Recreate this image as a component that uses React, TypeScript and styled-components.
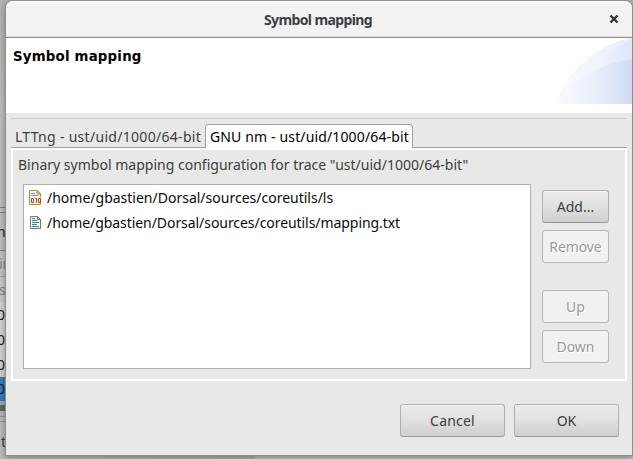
import React from 'react';
import styled, { createGlobalStyle, css } from 'styled-components';

const GlobalStyle = createGlobalStyle`
  * { box-sizing: border-box; }
  body {
    margin: 0;
    overflow: hidden;
    font-family: "Noto Sans", "Open Sans", sans-serif;
    font-size: 14px;
    color: #3a4042;
  }
`;

const Desktop = styled.div`
  position: relative;
  width: 633px;
  height: 459px;
  overflow: hidden;
  background: linear-gradient(#b2b2b1, #c0c0bf 120px, #bdbdbc);
`;

const Behind = styled.div`
  display: flex;
  flex-direction: column;
  height: 459px;
`;

const Strip = styled.div<{ $h: number; $bg?: string; $line?: string; $ink?: string }>`
  display: flex;
  align-items: center;
  flex: none;
  height: ${(p) => p.$h}px;
  line-height: 18px;
  white-space: pre;
  background: ${(p) => p.$bg ?? 'transparent'};
  border-bottom: ${(p) => (p.$line ? `1px solid ${p.$line}` : 'none')};
  color: ${(p) => p.$ink ?? '#1d1d1d'};
`;

const Clipped = styled.span<{ $shift: number }>`
  margin-left: ${(p) => p.$shift}px;
`;

const BottomStrip = styled.div`
  display: flex;
  flex: 1;
  align-items: flex-start;
  padding-top: 11px;
  border-right: 378px solid #c6c6c5;
  background: linear-gradient(90deg, #bdbdbc, #b3b3b2);
  line-height: 18px;
`;

const Dialog = styled.section`
  position: absolute;
  left: 5px;
  top: 0;
  width: 628px;
  height: 456px;
  display: flex;
  flex-direction: column;
  border: 1px solid #8e8e8d;
  border-radius: 8px 8px 0 0;
  background: #e8e8e6;
  box-shadow: 0 2px 7px rgba(0, 0, 0, 0.35);
`;

const TitleBar = styled.header`
  display: grid;
  grid-template-columns: 36px 1fr 36px;
  align-items: center;
  flex: none;
  height: 37px;
  border-top: 1px solid #fff;
  border-bottom: 1px solid #8e8e8e;
  border-radius: 7px 7px 0 0;
  background: linear-gradient(#f3f3f3 33px, #dedede);
`;

const WindowTitle = styled.h1`
  grid-column: 2;
  margin: 1px 0 0 -2px;
  font-size: 14px;
  font-weight: 700;
  line-height: 20px;
  letter-spacing: -0.6px;
  text-align: center;
`;

const CloseButton = styled.button`
  display: grid;
  place-items: center;
  padding: 0 0 1px;
  border: 0;
  background: none;
`;

const Banner = styled.div`
  display: flex;
  justify-content: space-between;
  flex: none;
  height: 75px;
  background: #fff;
`;

const BannerTitle = styled.h2`
  margin: 10px 0 0 7px;
  color: #000;
  font: bold 13.35px/18px "DejaVu Sans", sans-serif;
  letter-spacing: 0.2px;
`;

const Divider = styled.div`
  flex: none;
  height: 1px;
  margin: 5px 5px 0;
  background: #d0d0ce;
`;

const TabBar = styled.div`
  display: flex;
  flex: none;
  height: 24px;
  margin: 5px 5px 0;
`;

const Tab = styled.div<{ $active?: boolean }>`
  flex: none;
  line-height: 18px;
  font-size: 14px;
  white-space: nowrap;
  ${(p) =>
    p.$active
      ? css`
          width: 208px;
          padding: 3px 0 0 4px;
          border: 1px solid #a1a1a0;
          border-bottom: 0;
          border-radius: 4px 4px 0 0;
          background: #fff;
          color: #000;
          letter-spacing: 0.14px;
        `
      : css`
          width: 194px;
          padding: 4px 0 0 4px;
          border-bottom: 1px solid #a1a1a0;
          letter-spacing: 0.3px;
        `}
`;

const TabFill = styled.div`
  flex: 1;
  border-bottom: 1px solid #a1a1a0;
`;

const Panel = styled.div`
  display: flex;
  flex-direction: column;
  flex: none;
  height: 233px;
  margin: 0 5px;
  padding: 5px 16px 10px 10px;
  border: 2px solid #fff;
`;

const PanelLabel = styled.div`
  height: 29px;
  margin-left: -5px;
  line-height: 20px;
  white-space: nowrap;
  letter-spacing: 0.01px;
`;

const PanelBody = styled.div`
  display: flex;
  gap: 11px;
`;

const FileList = styled.ul`
  flex: none;
  width: 508px;
  height: 185px;
  margin: 0;
  padding: 0 0 0 3px;
  border: 1px solid #b1b1ae;
  background: #fff;
  list-style: none;
`;

const FileRow = styled.li<{ $track: number }>`
  display: flex;
  align-items: center;
  gap: 4px;
  height: 25px;
  color: #0a0a0a;
  white-space: nowrap;
  letter-spacing: ${(p) => p.$track}px;
  & > svg {
    margin-bottom: 1px;
  }
`;

const Actions = styled.div`
  display: flex;
  flex-direction: column;
  gap: 7px;
  padding-top: 6px;
`;

const ActionGroup = styled.div`
  display: flex;
  flex-direction: column;
  gap: 7px;
  margin-bottom: 20px;
`;

const Button = styled.button<{ $w: number; $track?: number }>`
  width: ${(p) => p.$w}px;
  height: 33px;
  padding: 0;
  border: 1px solid #b0b0ae;
  border-bottom-color: #949492;
  border-radius: 3px;
  background: linear-gradient(#ebebea, #e2e2e1 45%, #cfcfce);
  box-shadow: inset 0 1px #f8f8f7;
  color: #3a4042;
  font: 14px/20px "Noto Sans", sans-serif;
  letter-spacing: ${(p) => p.$track ?? 0}px;
  &:disabled {
    border-color: #b7b7b5;
    background: #f1f1f1;
    box-shadow: none;
    color: #999c9d;
    text-shadow: 1px 1px #fff;
  }
`;

const Footer = styled.footer`
  display: flex;
  justify-content: flex-end;
  gap: 9px;
  padding: 23px 13px 0 0;
`;

const CloseIcon = () => (
  <svg width="10" height="10" viewBox="0 0 10 10">
    <path d="M1.5 1.5 8.5 8.5M8.5 1.5 1.5 8.5" stroke="#2e3436" strokeWidth="2.4" />
  </svg>
);

const BannerArt = () => (
  <svg width="75" height="75" viewBox="0 0 75 75">
    <defs>
      <linearGradient id="outer" x1="0" x2="1">
        <stop offset="0" stopColor="#f8faff" />
        <stop offset=".6" stopColor="#eff3fc" />
        <stop offset="1" stopColor="#e6edfa" />
      </linearGradient>
      <linearGradient id="edge" x1="0" x2="1">
        <stop offset="0" stopColor="#eff3fc" />
        <stop offset="1" stopColor="#dde6f8" />
      </linearGradient>
      <linearGradient id="inner" x1="0" x2="1">
        <stop offset="0" stopColor="#fafbff" />
        <stop offset=".6" stopColor="#e6ecfa" />
        <stop offset="1" stopColor="#cfdbf4" />
      </linearGradient>
    </defs>
    <path d="M0 66C1 43 40 4 75 0V66Z" fill="url(#outer)" />
    <path d="M43 32C48 19 59 6 75 1V34Z" fill="url(#edge)" />
    <path d="M0 66C10 48 39 26 75 21V66Z" fill="url(#inner)" />
  </svg>
);

const BinaryIcon = () => (
  <svg width="16" height="16" viewBox="0 0 16 16">
    <path d="M2.5 1.5H10L13.5 5V15.5H2.5Z" fill="#fbf8ee" stroke="#b88a30" />
    <path d="M10 1.5V5H13.5Z" fill="#e8c77a" stroke="#b88a30" />
    <path d="M4 4.5H8M4 6.5H11" stroke="#7a93c4" />
    <path d="M12 8H15V14H12Z" fill="#fbf3ea" />
    <path d="M4.5 9.5H6.5V13.5H4.5ZM8 9.5H9.5V14M11.5 9.5H13.5V13.5H11.5Z" fill="none" stroke="#b8401a" />
  </svg>
);

const TextIcon = () => (
  <svg width="16" height="16" viewBox="0 0 16 16">
    <path d="M3.5 2.5H10.5L13.5 5.5V14.5H3.5Z" fill="#f5faf8" stroke="#77776a" />
    <path d="M10.5 2.5V5.5H13.5Z" fill="#c9c9ae" stroke="#77776a" />
    <path d="M5 4.5H8M5 6.5H10M5 8.5H12M5 10.5H10M5 12.5H12" stroke="#278e94" />
  </svg>
);

export default function App() {
  return (
    <Desktop>
      <GlobalStyle />
      <Behind>
        <Strip $h={208} $line="#858584" />
        <Strip $h={5} $line="#858584" />
        <Strip $h={38} $line="#858584"><Clipped $shift={-3}>n</Clipped></Strip>
        <Strip $h={26} $bg="#c4c4c3" $line="#a1a1a0" $ink="#858585"><Clipped $shift={-1}>in</Clipped></Strip>
        <Strip $h={25} $bg="#c9c9c9" $ink="#858585"><Clipped $shift={-1}>s</Clipped></Strip>
        <Strip $h={25} $bg="#d2d2d2"><Clipped $shift={-3}>0</Clipped></Strip>
        <Strip $h={25} $bg="#d2d2d2"><Clipped $shift={-3}>0</Clipped></Strip>
        <Strip $h={25} $bg="#d2d2d2"><Clipped $shift={-3}>0</Clipped></Strip>
        <Strip $h={24} $bg="#3b7abb"><Clipped $shift={-3}>0</Clipped></Strip>
        <Strip $h={4} $bg="#a5a5a4" />
        <Strip $h={6} $bg="#646766" />
        <Strip $h={6} $bg="#b6b6b5" $line="#929291" />
        <Strip $h={5} $line="#929291" />
        <BottomStrip><Clipped $shift={1}>t</Clipped></BottomStrip>
      </Behind>
      <Dialog>
        <TitleBar>
          <WindowTitle>Symbol mapping</WindowTitle>
          <CloseButton aria-label="Close"><CloseIcon /></CloseButton>
        </TitleBar>
        <Banner>
          <BannerTitle>Symbol mapping</BannerTitle>
          <BannerArt />
        </Banner>
        <Divider />
        <TabBar>
          <Tab>LTTng - ust/uid/1000/64-bit</Tab>
          <Tab $active>GNU nm - ust/uid/1000/64-bit</Tab>
          <TabFill />
        </TabBar>
        <Panel>
          <PanelLabel>Binary symbol mapping configuration for trace "ust/uid/1000/64-bit"</PanelLabel>
          <PanelBody>
            <FileList>
              <FileRow $track={0}><BinaryIcon />/home/gbastien/Dorsal/sources/coreutils/ls</FileRow>
              <FileRow $track={-0.06}><TextIcon />/home/gbastien/Dorsal/sources/coreutils/mapping.txt</FileRow>
            </FileList>
            <Actions>
              <ActionGroup>
                <Button $w={67}>Add...</Button>
                <Button $w={67} $track={-0.1} disabled>Remove</Button>
              </ActionGroup>
              <Button $w={67} disabled>Up</Button>
              <Button $w={67} disabled>Down</Button>
            </Actions>
          </PanelBody>
        </Panel>
        <Footer>
          <Button $w={105} $track={0.2}>Cancel</Button>
          <Button $w={105}>OK</Button>
        </Footer>
      </Dialog>
    </Desktop>
  );
}
